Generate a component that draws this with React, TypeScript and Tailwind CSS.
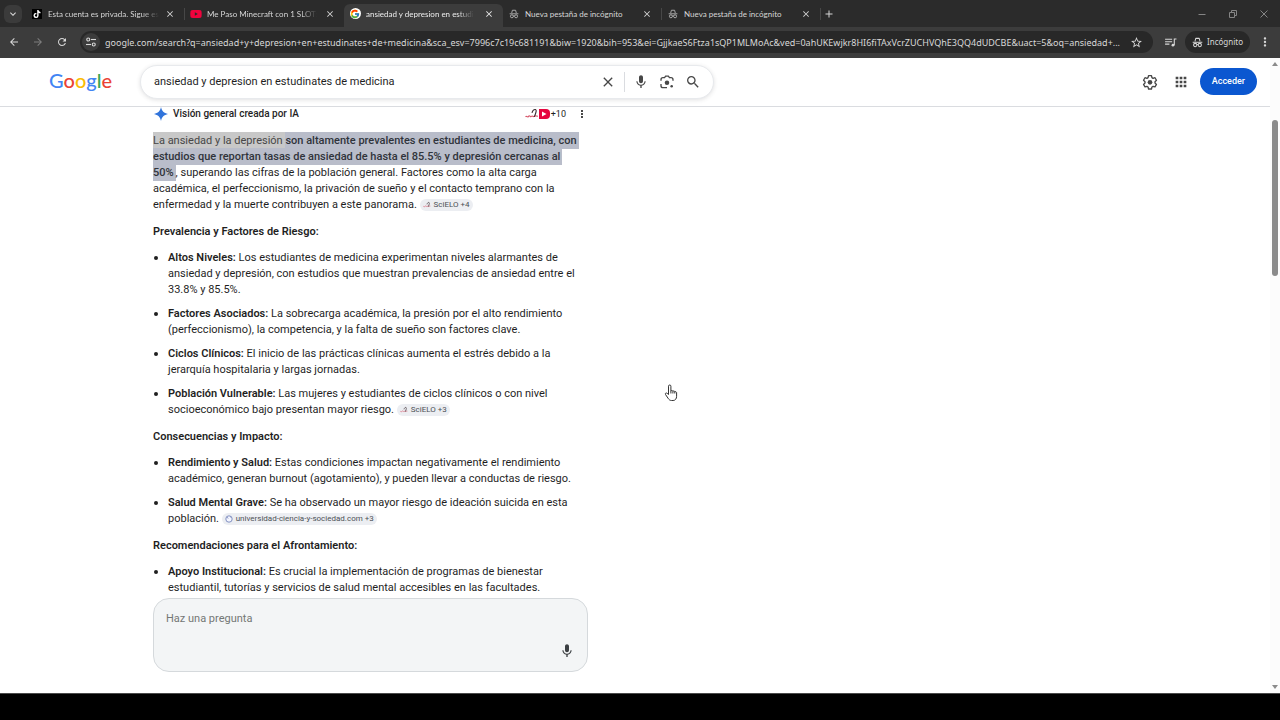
import React, { useState } from 'react';
import { FcGoogle } from 'react-icons/fc';
import { FaTiktok, FaYoutube } from 'react-icons/fa';
import {
  MdAdd,
  MdApps,
  MdArrowBack,
  MdArrowForward,
  MdClose,
  MdKeyboardArrowDown,
  MdMic,
  MdMoreVert,
  MdRefresh,
  MdSearch,
  MdStarBorder,
} from 'react-icons/md';

const PAGE_URL =
  'google.com/search?q=ansiedad+y+depresion+en+estudinates+de+medicina&sca_esv=7996c7c19c681191&biw=1920&bih=953&ei=GjjkaeS6Ftza1sQP1MLMoAc&ved=0ahUKEwjkr8HI6fiTAxVcrZUCHVQhE3QQ4dUDCBE&uact=5&oq=ansiedad+...';

function IncognitoIcon({ className }: { className?: string }) {
  return (
    <svg viewBox="0 0 24 24" className={className} fill="none" stroke="currentColor" strokeWidth="2.2">
      <path d="M6.5 9.5 8.2 3h7.6l1.7 6.5" strokeLinejoin="round" />
      <path d="M1.5 11.5h21" />
      <circle cx="7" cy="17.5" r="3.6" />
      <circle cx="17" cy="17.5" r="3.6" />
      <path d="M10.5 16.8q1.5-1 3 0" />
    </svg>
  );
}

function SiteInfoIcon() {
  return (
    <svg viewBox="0 0 24 24" className="size-3" fill="none" stroke="currentColor" strokeWidth="2.2">
      <circle cx="6.5" cy="7" r="3" />
      <path d="M12 7h10" />
      <circle cx="17.5" cy="17" r="3" />
      <path d="M2 17h10" />
    </svg>
  );
}

function MediaIcon() {
  return (
    <svg viewBox="0 0 24 24" className="size-[13px]" fill="none" stroke="currentColor" strokeWidth="2">
      <path d="M2 6h13M2 10.500h13M2 15h8M19 17V5.500h4" />
      <circle cx="16.500" cy="17" r="2.500" fill="currentColor" stroke="none" />
    </svg>
  );
}

function LensIcon() {
  return (
    <svg viewBox="0 0 24 24" className="size-4" fill="none" stroke="currentColor" strokeWidth="2">
      <path d="M3 10V8.500a3 3 0 0 1 3-3h2.300L10 3.200h4l1.700 2.300H18a3 3 0 0 1 3 3V10" />
      <path d="M3 15v2.500a3 3 0 0 0 3 3h6" />
      <circle cx="12" cy="13" r="3.400" fill="currentColor" stroke="none" />
      <circle cx="19" cy="18.500" r="1.900" fill="currentColor" stroke="none" />
    </svg>
  );
}

function GearIcon() {
  return (
    <svg viewBox="0 0 24 24" className="size-4" fill="none" stroke="currentColor" strokeWidth="2" strokeLinejoin="round">
      <path d="M9.800 2.500h4.400l.7 3 1.700 1 2.900-.9 2.200 3.800-2.200 2.100v2l2.200 2.100-2.200 3.800-2.900-.9-1.700 1-.7 3H9.800l-.7-3-1.700-1-2.900.9-2.200-3.800 2.200-2.100v-2L2.300 9.400l2.200-3.800 2.900.9 1.700-1z" />
      <circle cx="12" cy="12.500" r="3.500" fill="currentColor" stroke="none" />
    </svg>
  );
}

function SparkIcon() {
  return (
    <svg viewBox="0 0 24 24" className="size-4 shrink-0">
      <path d="M12 1.500c1.300 6.200 4.300 9.200 10.500 10.500-6.200 1.300-9.200 4.300-10.500 10.500C10.700 16.300 7.700 13.300 1.500 12 7.700 10.700 10.700 7.700 12 1.500z" fill="#3174db" />
    </svg>
  );
}

function ScieloMark({ className }: { className?: string }) {
  return (
    <svg viewBox="0 0 12 12" className={className} fill="none">
      <path d="M.5 8.500c1-1.500 1.500 1 2.500-.5s1.500 1 2.500 0 1.500 1 2.500 0 2 .3 3-.3" stroke="#d6566a" />
      <path d="M6 5c.5-2 1.800-3.200 3-2.800S9.500 4.500 8 8.500" stroke="#3c2f33" />
    </svg>
  );
}

function SourceChip({ label, globe }: { label: string; globe?: boolean }) {
  return (
    <button
      type="button"
      className="inline-flex h-3 items-center gap-[3px] rounded-full bg-[#eceef2] px-[3px] align-middle text-[8px] leading-3 text-[#4d5156]"
    >
      {globe ? (
        <svg viewBox="0 0 12 12" className="size-2" fill="none" stroke="#8290c0" strokeWidth="1.500">
          <circle cx="6" cy="6" r="4.800" fill="#f4f6ff" />
          <path d="M3 3.500 5 5M9 4 8 2" />
        </svg>
      ) : (
        <ScieloMark className="size-2" />
      )}
      <span>{label}</span>
    </button>
  );
}

interface Tab {
  title: string;
  icon: React.ReactNode;
  active?: boolean;
}

const tabs: Tab[] = [
  {
    title: 'Esta cuenta es privada. Sigue es',
    icon: (
      <span className="flex size-[10px] items-center justify-center bg-black text-white">
        <FaTiktok className="size-2" />
      </span>
    ),
  },
  { title: 'Me Paso Minecraft con 1 SLOT:', icon: <FaYoutube className="size-3 text-[#f0033d]" /> },
  {
    title: 'ansiedad y depresion en estudi',
    active: true,
    icon: (
      <span className="flex size-[11px] items-center justify-center rounded-full bg-white">
        <FcGoogle className="size-[10px]" />
      </span>
    ),
  },
  { title: 'Nueva pestaña de incógnito', icon: <IncognitoIcon className="size-[10px] text-[#b4b4b4]" /> },
  { title: 'Nueva pestaña de incógnito', icon: <IncognitoIcon className="size-[10px] text-[#b4b4b4]" /> },
];

function TabStrip() {
  return (
    <div className="flex h-[27px] items-end bg-[#2b2b2b] font-[Lato,sans-serif] text-[#d6d6d6]">
      <div className="flex h-[27px] w-[26px] shrink-0 items-center justify-center">
        <button type="button" aria-label="Buscar pestañas" className="flex size-[18px] items-center justify-center rounded-md bg-[#3b3b3b]">
          <MdKeyboardArrowDown className="size-3" />
        </button>
      </div>
      {tabs.map((tab, i) => (
        <div key={i} className="flex h-[23px] w-[159px] min-w-0 items-center">
          <div
            className={`flex h-full min-w-0 flex-1 items-center gap-[5px] pr-[9px] pb-1 pl-[5px] ${
              tab.active ? 'rounded-t-md bg-[#3c3c3c] text-[#ececec]' : ''
            }`}
          >
            <span className="flex w-3 shrink-0 justify-center">{tab.icon}</span>
            <span
              className={`text-[8px] leading-4 whitespace-nowrap ${
                i < 3 ? '[mask-image:linear-gradient(to_right,black_85%,transparent)]' : ''
              }`}
            >
              {tab.title}
            </span>
            <button type="button" aria-label="Cerrar pestaña" className="ml-auto">
              <MdClose className="size-[10px]" />
            </button>
          </div>
          {(i === 0 || i > 2) && <span className="mb-1 h-3 w-px bg-[#474747]" />}
        </div>
      ))}
      <button type="button" aria-label="Nueva pestaña" className="mb-[7px] ml-[2px]">
        <MdAdd className="size-3" />
      </button>
      <div className="mr-[11px] mb-[8px] ml-auto flex items-center gap-[21px] text-[#858585]">
        <button type="button" aria-label="Minimizar">
          <svg viewBox="0 0 10 10" className="size-[10px]" stroke="currentColor">
            <path d="M1.500 5.500h7" />
          </svg>
        </button>
        <button type="button" aria-label="Restaurar">
          <svg viewBox="0 0 10 10" className="size-[10px]" fill="none" stroke="currentColor">
            <path d="M1.500 3.500h5v5h-5zM3.500 3V1.500h5v5H7" />
          </svg>
        </button>
        <button type="button" aria-label="Cerrar">
          <svg viewBox="0 0 10 10" className="size-[10px]" stroke="currentColor">
            <path d="m1.500 1.500 7 7m0-7-7 7" />
          </svg>
        </button>
      </div>
    </div>
  );
}

function Toolbar() {
  return (
    <div className="flex h-[31px] items-center bg-[#3c3c3c] pr-2 pb-px pl-2 font-['Noto_Sans',sans-serif] text-[#d8d8d8]">
      <div className="flex items-center gap-3">
        <button type="button" aria-label="Atrás">
          <MdArrowBack className="size-3" />
        </button>
        <button type="button" aria-label="Adelante" className="text-[#7d7d7d]">
          <MdArrowForward className="size-3" />
        </button>
        <button type="button" aria-label="Recargar">
          <MdRefresh className="size-3" />
        </button>
      </div>
      <div className="ml-3 flex h-[22px] min-w-0 flex-1 items-center rounded-full bg-[#282828] pr-[10px] pl-[2px]">
        <button type="button" aria-label="Información del sitio" className="flex size-[18px] shrink-0 items-center justify-center rounded-full bg-[#3c3c3c]">
          <SiteInfoIcon />
        </button>
        <input
          type="text"
          aria-label="Dirección"
          readOnly
          value={PAGE_URL}
          className="ml-[5px] h-4 min-w-0 flex-1 bg-transparent text-[9px] outline-none"
        />
        <button type="button" aria-label="Añadir a marcadores" className="ml-2">
          <MdStarBorder className="size-[13px]" />
        </button>
      </div>
      <button type="button" aria-label="Controles multimedia" className="ml-[11px]">
        <MediaIcon />
      </button>
      <div className="ml-2 flex h-[22px] items-center gap-1 rounded-full bg-[#282828] px-[7px] text-[8px]">
        <IncognitoIcon className="size-[11px]" />
        Incógnito
      </div>
      <button type="button" aria-label="Menú" className="ml-2">
        <MdMoreVert className="size-[14px]" />
      </button>
    </div>
  );
}

function SearchHeader() {
  const [query, setQuery] = useState('ansiedad y depresion en estudinates de medicina');

  return (
    <header className="flex h-[49px] shrink-0 items-center border-b border-[#dadce0] pr-[13px] pb-px pl-[49px] text-[#474747]">
      <a href="#" aria-label="Google" className="w-[91px] shrink-0 pb-[3px] font-[Lato,sans-serif] text-[20px] leading-6 font-medium">
        <span className="text-[#4285f4]">G</span>
        <span className="text-[#ea4335]">o</span>
        <span className="text-[#fbbc05]">o</span>
        <span className="text-[#4285f4]">g</span>
        <span className="text-[#34a853]">l</span>
        <span className="text-[#ea4335]">e</span>
      </a>
      <form
        onSubmit={(e) => e.preventDefault()}
        className="flex h-[34px] max-w-[574px] flex-1 items-center rounded-full border border-[#e8eaed] bg-white pr-3 pl-[13px] shadow-[0_1px_4px_rgba(60,64,67,0.16)]"
      >
        <input
          type="text"
          aria-label="Buscar"
          value={query}
          onChange={(e) => setQuery(e.target.value)}
          className="h-5 min-w-0 flex-1 bg-transparent text-[11px] text-[#1f1f1f] outline-none"
        />
        <button type="button" aria-label="Borrar" onClick={() => setQuery('')}>
          <MdClose className="size-4" />
        </button>
        <span className="mx-2 h-5 w-px bg-[#dadce0]" />
        <div className="flex gap-[10px]">
          <button type="button" aria-label="Buscar por voz">
            <MdMic className="size-4" />
          </button>
          <button type="button" aria-label="Buscar por imagen">
            <LensIcon />
          </button>
          <button type="submit" aria-label="Buscar">
            <MdSearch className="size-4" />
          </button>
        </div>
      </form>
      <div className="ml-auto flex items-center gap-[11px]">
        <button type="button" aria-label="Configuración" className="mr-1">
          <GearIcon />
        </button>
        <button type="button" aria-label="Aplicaciones de Google">
          <MdApps className="size-4" />
        </button>
        <a href="#" className="flex h-[27px] items-center rounded-full bg-[#0b57d0] px-3 text-[9px] font-medium text-white">
          Acceder
        </a>
      </div>
    </header>
  );
}

function Section({ title, children }: { title: string; children: React.ReactNode }) {
  return (
    <section className="mt-[11px]">
      <h2 className="mb-[10px] font-semibold">{title}</h2>
      <ul className="list-none space-y-2">{children}</ul>
    </section>
  );
}

function Item({ label, children }: { label: string; children: React.ReactNode }) {
  return (
    <li className="flex">
      <span className="mt-[6px] mr-[10px] ml-px size-1 shrink-0 rounded-full bg-[#1f1f1f]" />
      <p>
        <strong className="font-semibold">{label}</strong> {children}
      </p>
    </li>
  );
}

function Overview() {
  return (
    <div className="min-h-0 flex-1 overflow-hidden text-[11px] leading-4 whitespace-nowrap text-[#1f1f1f]">
      <div className="mb-3 flex h-[14px] items-center">
        <SparkIcon />
        <h1 className="ml-1 text-[10px] font-medium">Visión general creada por IA</h1>
        <div className="ml-auto flex items-center text-[9px]">
          <ScieloMark className="size-[14px]" />
          <span className="flex h-[10px] w-[11px] items-center justify-center rounded-r-sm bg-[#e6063f]">
            <svg viewBox="0 0 6 6" className="size-1.5" fill="white">
              <path d="M1 .5 5.500 3 1 5.500z" />
            </svg>
          </span>
          <span className="ml-px">+10</span>
          <button type="button" aria-label="Más opciones" className="ml-[10px]">
            <MdMoreVert className="size-3" />
          </button>
        </div>
      </div>

      <p>
        <span className="bg-[#c8c8c8] py-[2px] text-[#474747]">La ansiedad y la depresión </span>{' '}
        <mark className="box-decoration-clone bg-[#b9bdca] py-[2px] pr-[2px] font-medium text-[#30343b]">
          son altamente prevalentes en estudiantes de medicina, con
          <br />
          estudios que reportan tasas de ansiedad de hasta el 85.5% y depresión cercanas al
          <br />
          50%
        </mark>
        , superando las cifras de la población general. Factores como la alta carga
        <br />
        académica, el perfeccionismo, la privación de sueño y el contacto temprano con la
        <br />
        enfermedad y la muerte contribuyen a este panorama. <SourceChip label="SciELO +4" />
      </p>

      <Section title="Prevalencia y Factores de Riesgo:">
        <Item label="Altos Niveles:">
          Los estudiantes de medicina experimentan niveles alarmantes de
          <br />
          ansiedad y depresión, con estudios que muestran prevalencias de ansiedad entre el
          <br />
          33.8% y 85.5%.
        </Item>
        <Item label="Factores Asociados:">
          La sobrecarga académica, la presión por el alto rendimiento
          <br />
          (perfeccionismo), la competencia, y la falta de sueño son factores clave.
        </Item>
        <Item label="Ciclos Clínicos:">
          El inicio de las prácticas clínicas aumenta el estrés debido a la
          <br />
          jerarquía hospitalaria y largas jornadas.
        </Item>
        <Item label="Población Vulnerable:">
          Las mujeres y estudiantes de ciclos clínicos o con nivel
          <br />
          socioeconómico bajo presentan mayor riesgo. <SourceChip label="SciELO +3" />
        </Item>
      </Section>

      <Section title="Consecuencias y Impacto:">
        <Item label="Rendimiento y Salud:">
          Estas condiciones impactan negativamente el rendimiento
          <br />
          académico, generan burnout (agotamiento), y pueden llevar a conductas de riesgo.
        </Item>
        <Item label="Salud Mental Grave:">
          Se ha observado un mayor riesgo de ideación suicida en esta
          <br />
          población. <SourceChip label="universidad-ciencia-y-sociedad.com +3" globe />
        </Item>
      </Section>

      <Section title="Recomendaciones para el Afrontamiento:">
        <Item label="Apoyo Institucional:">
          Es crucial la implementación de programas de bienestar
          <br />
          estudiantil, tutorías y servicios de salud mental accesibles en las facultades.
        </Item>
      </Section>
    </div>
  );
}

function AskBox() {
  return (
    <div className="mb-[21px] flex h-[74px] shrink-0 rounded-[16px] border border-[#d5d9dc] bg-[#f3f5f6] p-3">
      <textarea
        aria-label="Haz una pregunta"
        placeholder="Haz una pregunta"
        className="flex-1 resize-none bg-transparent text-[11px] leading-4 outline-none placeholder:text-[#747775]"
      />
      <button type="button" aria-label="Preguntar por voz" className="self-end text-[#3c4043]">
        <MdMic className="size-4" />
      </button>
    </div>
  );
}

function Scrollbar() {
  return (
    <div className="flex w-[10px] shrink-0 flex-col items-center bg-[#fcfcfc] pt-1 pb-1 text-[#8b8b8b]">
      <svg viewBox="0 0 6 4" className="h-1 w-1.5" fill="currentColor">
        <path d="M3 0 6 4H0z" />
      </svg>
      <div className="mt-[54px] h-[156px] w-[6px] rounded-full bg-[#8b8b8b]" />
      <svg viewBox="0 0 6 4" className="mt-auto h-1 w-1.5" fill="currentColor">
        <path d="M0 0h6L3 4z" />
      </svg>
    </div>
  );
}

export default function App() {
  return (
    <div className="relative flex h-screen flex-col overflow-hidden bg-black font-[Roboto,sans-serif]">
      <TabStrip />
      <Toolbar />
      <div className="flex min-h-0 flex-1 border-b border-[#4a4a4a] bg-white">
        <div className="flex min-w-0 flex-1 flex-col">
          <SearchHeader />
          <main className="ml-[153px] flex min-h-0 w-full max-w-[435px] flex-1 flex-col">
            <Overview />
            <AskBox />
          </main>
        </div>
        <Scrollbar />
      </div>
      <div className="h-[26px] shrink-0 bg-black" />

      {/* Hand cursor */}
      <svg viewBox="0 0 14 18" className="absolute top-[384px] left-[664px] h-[18px] w-[14px]" fill="white" stroke="#333" strokeLinejoin="round">
        <path d="M4.500 10.500V2.200a1.200 1.200 0 0 1 2.400 0V7c.4-.8 1.800-.7 2 .3.600-.7 1.700-.4 1.900.5.900-.5 1.800 0 1.800 1v3.500c0 2.500-1.400 4.200-3.500 4.200H7.500c-1.700 0-2.500-.9-3.400-2.200L1.500 10.500c-.6-1.200.6-2 1.600-1.200z" />
        <path d="M6.900 7v2.500M8.900 7.300v2.200M10.800 7.800v1.700" fill="none" />
      </svg>
    </div>
  );
}
